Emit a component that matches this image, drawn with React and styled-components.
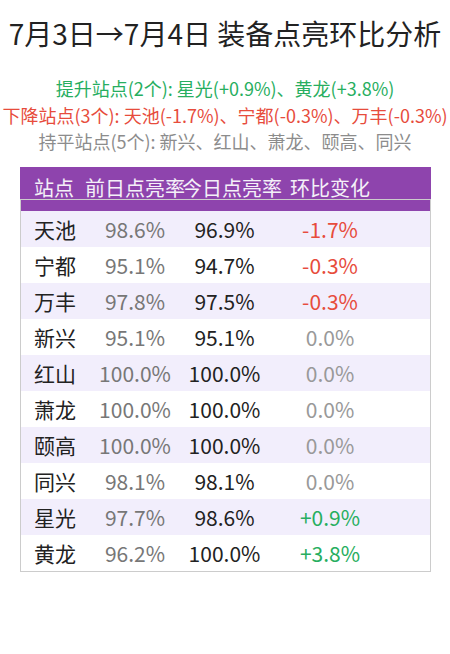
import React from "react";
import styled, { createGlobalStyle } from "styled-components";

const rows = [
  { name: "天池", prev: "98.6%", today: "96.9%", diff: "-1.7%", trend: "down" },
  { name: "宁都", prev: "95.1%", today: "94.7%", diff: "-0.3%", trend: "down" },
  { name: "万丰", prev: "97.8%", today: "97.5%", diff: "-0.3%", trend: "down" },
  { name: "新兴", prev: "95.1%", today: "95.1%", diff: "0.0%", trend: "flat" },
  { name: "红山", prev: "100.0%", today: "100.0%", diff: "0.0%", trend: "flat" },
  { name: "萧龙", prev: "100.0%", today: "100.0%", diff: "0.0%", trend: "flat" },
  { name: "颐高", prev: "100.0%", today: "100.0%", diff: "0.0%", trend: "flat" },
  { name: "同兴", prev: "98.1%", today: "98.1%", diff: "0.0%", trend: "flat" },
  { name: "星光", prev: "97.7%", today: "98.6%", diff: "+0.9%", trend: "up" },
  { name: "黄龙", prev: "96.2%", today: "100.0%", diff: "+3.8%", trend: "up" },
];

const trendColors = {
  up: "#27ae60",
  down: "#e74c3c",
  flat: "#999999",
};

const App = () => {
  return (
    <Page>
      <GlobalStyle />
      <Title>7月3日→7月4日 装备点亮环比分析</Title>
      <Summary>
        <SummaryLine trend="up">提升站点(2个): 星光(+0.9%)、黄龙(+3.8%)</SummaryLine>
        <SummaryLine trend="down">
          下降站点(3个): 天池(-1.7%)、宁都(-0.3%)、万丰(-0.3%)
        </SummaryLine>
        <SummaryLine trend="flat">持平站点(5个): 新兴、红山、萧龙、颐高、同兴</SummaryLine>
      </Summary>
      <TableWrap>
        <HeadBar>
          <span>站点</span>
          <span>前日点亮率</span>
          <span>今日点亮率</span>
          <span>环比变化</span>
        </HeadBar>
        <Table>
          <Band />
          {rows.map((r, i) => (
            <Row key={r.name} striped={i % 2 === 0}>
              <Name>{r.name}</Name>
              <Cell tone="#777777">{r.prev}</Cell>
              <Cell tone="#222222">{r.today}</Cell>
              <Cell tone={trendColors[r.trend]}>{r.diff}</Cell>
            </Row>
          ))}
        </Table>
      </TableWrap>
    </Page>
  );
};

export default App;

const GlobalStyle = createGlobalStyle`
  body {
    margin: 0;
    background: #ffffff;
    font-family: "Noto Sans CJK SC", "Noto Sans", sans-serif;
  }
`;

const Page = styled.div`
  width: 450px;
  height: 654px;
  padding-top: 16px;
  box-sizing: border-box;
  overflow: hidden;
`;

const Title = styled.h1`
  margin: 0;
  text-align: center;
  font-size: 28px;
  line-height: 34px;
  font-weight: 400;
  color: #222222;
  white-space: nowrap;
`;

const Summary = styled.div`
  margin-top: 25px;
  display: flex;
  flex-direction: column;
  align-items: center;
`;

const SummaryLine = styled.div`
  font-size: 18px;
  line-height: 26.5px;
  white-space: nowrap;
  color: ${({ trend }) => (trend === "flat" ? "#8c8c8c" : trendColors[trend])};
`;

const TableWrap = styled.div`
  margin: 12px 19px 0 20px;
`;

const HeadBar = styled.div`
  display: grid;
  grid-template-columns: 51px 97px 108px 1fr;
  padding-left: 14px;
  height: 32px;
  align-items: end;
  background: #8e44ad;
  color: #f4f0f8;
  font-size: 20px;
  line-height: 22px;
  white-space: nowrap;
`;

const Table = styled.div`
  border: 1px solid #cccccc;
`;

const Band = styled.div`
  height: 11px;
  background: #8e44ad;
`;

const Row = styled.div`
  display: grid;
  grid-template-columns: 70px 88px 91px 120px 1fr;
  height: 36px;
  align-items: center;
  background: ${({ striped }) => (striped ? "#f2eefc" : "#ffffff")};
  font-size: 21px;
  white-space: nowrap;
`;

const Name = styled.div`
  padding-left: 13px;
  color: #222222;
`;

const Cell = styled.div`
  text-align: center;
  color: ${({ tone }) => tone};
`;
